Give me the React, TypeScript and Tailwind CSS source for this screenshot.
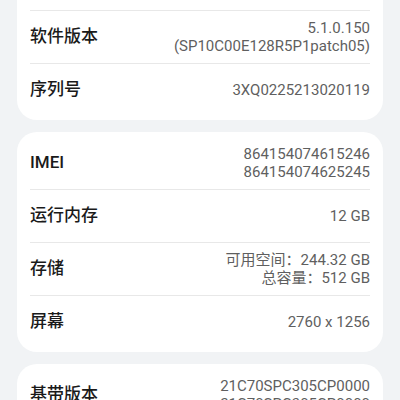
import React from 'react';

interface Row {
  label: string;
  values: string[];
}

const CARDS: Row[][] = [
  [
    { label: '', values: [] },
    { label: '软件版本', values: ['5.1.0.150', '(SP10C00E128R5P1patch05)'] },
    { label: '序列号', values: ['3XQ0225213020119'] },
  ],
  [
    { label: 'IMEI', values: ['864154074615246', '864154074625245'] },
    { label: '运行内存', values: ['12 GB'] },
    { label: '存储', values: ['可用空间：244.32 GB', '总容量：512 GB'] },
    { label: '屏幕', values: ['2760 x 1256'] },
  ],
  [
    { label: '基带版本', values: ['21C70SPC305CP0000', '21C70SPC305CP0000'] },
  ],
];

const font = { fontFamily: 'Roboto, "Noto Sans CJK SC", sans-serif' };

const App: React.FC = () => {
  return (
    <div className="w-[400px] h-[400px] overflow-hidden bg-[#f1f3f5]" style={font}>
      <div className="-mt-[47px] px-[17px] flex flex-col gap-3">
        {CARDS.map((rows, ci) => (
          <div key={ci} className="bg-white rounded-[20px] px-[13px] py-1">
            {rows.map((row, ri) => (
              <div
                key={ri}
                className={`h-[53px] flex items-center justify-between ${ri > 0 ? 'border-t border-[#e8e8e8]' : ''}`}
              >
                <span className="text-[17px] font-medium text-[#1a1a1a]">{row.label}</span>
                <div className="flex flex-col items-end text-[15px] leading-[18px] text-[#5f5f5f]">
                  {row.values.map((v, vi) => (
                    <span key={vi}>{v}</span>
                  ))}
                </div>
              </div>
            ))}
          </div>
        ))}
      </div>
    </div>
  );
};

export default App;
